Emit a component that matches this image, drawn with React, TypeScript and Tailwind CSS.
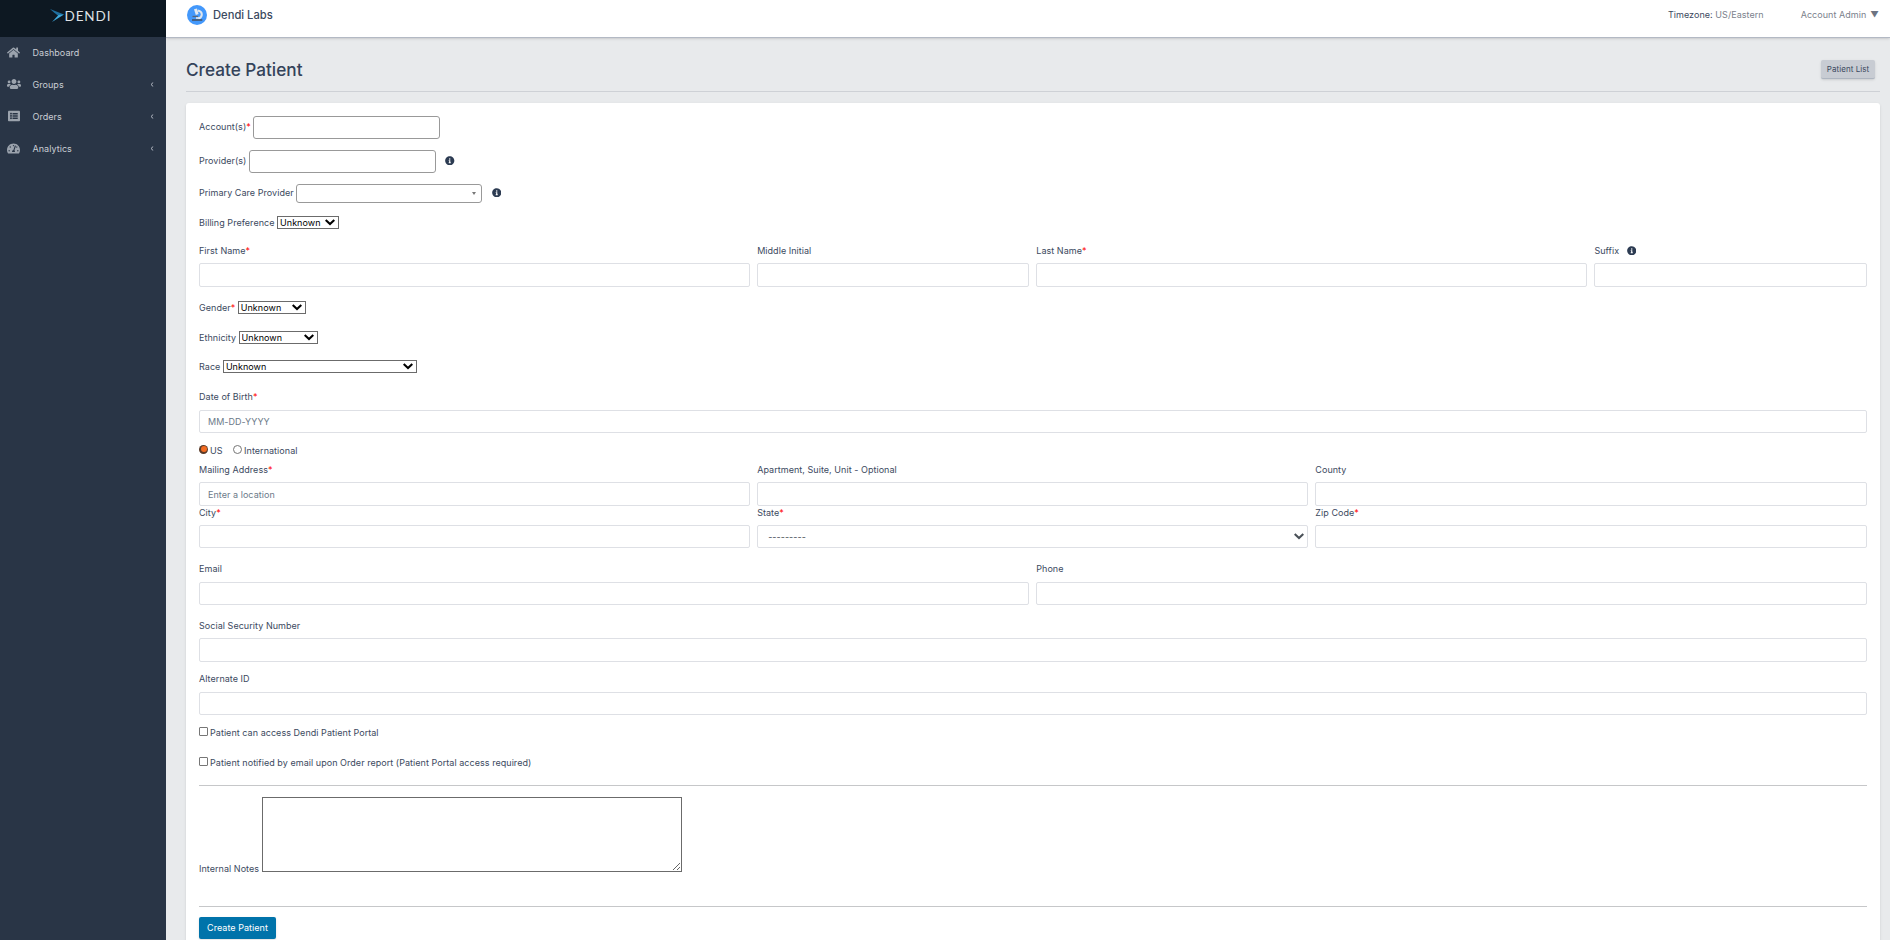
import type { ReactNode } from 'react'
import clsx from 'clsx'
import { FaHome, FaInfoCircle, FaListAlt, FaTachometerAlt, FaUsers } from 'react-icons/fa'

const NAV = [
  { label: 'Dashboard', icon: <FaHome size={13} />, nested: false },
  { label: 'Groups', icon: <FaUsers size={14} />, nested: true },
  { label: 'Orders', icon: <FaListAlt size={12} />, nested: true },
  { label: 'Analytics', icon: <FaTachometerAlt size={13} />, nested: true },
]

function Logo() {
  return (
    <div className="flex items-center h-[37px] pl-[50px] pb-[5px] bg-[#0d1822]">
      <svg width="62" height="14" viewBox="0 0 62 14" fill="none">
        <path d="M0 0 L14 5.5 L8.5 7 L4 3.5 Z" fill="#1f6f9f" />
        <path d="M14 5.5 L2 13 L8.5 6 Z" fill="#3fa9dc" />
        <text x="14.5" y="12" fill="#dfe2e5" fontFamily="Lato" fontSize="13.5" textLength="46">DENDI</text>
      </svg>
    </div>
  )
}

function Sidebar() {
  return (
    <aside className="w-[166px] shrink-0 bg-[#293546]">
      <Logo />
      <nav>
        {NAV.map((item) => (
          <a key={item.label} href="#" className="flex items-center h-8 pr-[12px] text-[#c9ced5]">
            <span className="mb-[2px] flex w-[27px] justify-center text-[#9ba3ad]">{item.icon}</span>
            <span className="ml-[5.5px] flex-1">{item.label}</span>
            {item.nested && (
              <svg width="4" height="5" viewBox="0 0 4 5" fill="none" className="mb-px">
                <path d="M3.2 0.5 L1 2.5 L3.2 4.5" stroke="#b4bac3" />
              </svg>
            )}
          </a>
        ))}
      </nav>
    </aside>
  )
}

function Header() {
  return (
    <header className="flex h-[38px] shrink-0 items-center border-b border-[#b3b9c4] bg-white pl-[21px] pr-[11px] pb-[7px] shadow-sm">
      <svg width="20" height="20" viewBox="0 0 20 20">
        <circle cx="10" cy="10" r="10" fill="#4398fb" />
        <path d="M7 4.2 L10 3.4 L11.6 9 L8.8 10 Z" fill="#e4e9ef" />
        <path d="M11 5.5 C16 6.5 16 12 11.5 13.6" stroke="#dfe6ee" strokeWidth="2" fill="none" />
        <path d="M5.5 11.5 H11" stroke="#56657a" strokeWidth="1.3" />
        <path d="M9 13 H13" stroke="#e4e9ef" strokeWidth="1.6" />
        <path d="M5 15 H15.3" stroke="#465468" strokeWidth="1.6" />
      </svg>
      <span className="ml-[6px] flex-1 text-[11.2px]/3 font-medium tracking-normal">Dendi Labs</span>
      <span className="text-[#7b818c]"><span className="text-[#3b4960]">Timezone:</span> US/Eastern</span>
      <span className="ml-[37px] text-[#7b818c]">Account Admin</span>
      <span className="ml-[4px] text-[8.5px] text-[#6d7482]">▼</span>
    </header>
  )
}

function Label({ children, required, className }: { children: ReactNode; required?: boolean; className?: string }) {
  return (
    <label className={clsx('flex h-3 items-center whitespace-nowrap', className)}>
      {children}
      {required && <span className="text-[#ff0000]">*</span>}
    </label>
  )
}

function Info({ className }: { className?: string }) {
  return <FaInfoCircle size={9.5} className={clsx('text-[#2c3b52]', className)} />
}

function Field({ label, required, info, placeholder, className, box = 'mt-[6px] h-6' }: {
  label: string
  required?: boolean
  info?: boolean
  placeholder?: string
  className?: string
  box?: string
}) {
  return (
    <div className={className}>
      <Label required={required}>{label}{info && <Info className="ml-[7.5px] mb-px" />}</Label>
      <input
        placeholder={placeholder}
        className={clsx('block w-full rounded-[2px] border border-[#dee0e5] bg-white px-2 placeholder:text-[#6c7a89]', box)}
      />
    </div>
  )
}

function Chevron({ className }: { className?: string }) {
  return (
    <svg width="10" height="7" viewBox="0 0 10 7" fill="none" className={clsx('pointer-events-none absolute', className)}>
      <path d="M0.7 1 L5 5 L9.3 1" stroke="currentColor" strokeWidth="2.1" />
    </svg>
  )
}

function NativeSelect({ label, required, width, className }: {
  label: string
  required?: boolean
  width: string
  className: string
}) {
  return (
    <div className={clsx('flex h-[13px] items-center gap-[2.5px]', className)}>
      <Label required={required}>{label}</Label>
      <div className={clsx('relative h-[13px]', width)}>
        <select className="block h-full w-full appearance-none border border-[#6b6b6b] bg-white pl-[2px] leading-[11px] text-black">
          <option>Unknown</option>
        </select>
        <Chevron className="right-1 top-[3px] text-black" />
      </div>
    </div>
  )
}

export default function App() {
  return (
    <div className="flex h-[940px] overflow-hidden bg-[#e8eaec] font-['Inter',sans-serif] text-[9px] leading-3 tracking-[0.045px] text-[#3b4960]">
      <Sidebar />
      <div className="flex min-w-0 flex-1 flex-col">
        <Header />
        <main className="pl-5 pr-[10px]">
          <div className="flex h-[54px] items-center justify-between border-b border-[#ced1d6] pr-[5px] pt-5">
            <h1 className="mb-[9px] text-[17.2px] font-medium leading-6 tracking-normal text-[#34435a]">Create Patient</h1>
            <button className="mb-[10px] h-[19px] w-[54px] rounded-[2px] border-b border-[#aeb5c0] bg-[#c8ccd3] text-[8px] shadow-sm">Patient List</button>
          </div>

          <form className="mt-[11px] h-[880px] rounded-[3px] bg-white pl-[13px] pr-[13.5px] pt-[13px] shadow">
            <div className="flex h-[23px] items-center gap-[2px]">
              <Label required className="mb-[2px]">Account(s)</Label>
              <input className="h-full w-[187px] rounded-[3px] border border-[#999]" />
            </div>
            <div className="mt-[11px] flex h-[23px] items-center gap-[2.5px]">
              <Label className="mb-[2px]">Provider(s)</Label>
              <input className="h-full w-[187px] rounded-[3px] border border-[#999]" />
              <Info className="mb-[2px] ml-[7px]" />
            </div>
            <div className="mt-[11px] flex h-[19px] items-center gap-[2.25px]">
              <Label className="mb-[2px]">Primary Care Provider</Label>
              <div className="flex h-full w-[186px] items-center justify-end rounded-[3px] border border-[#999] pr-[5px]">
                <svg width="4" height="3" viewBox="0 0 4 3"><path d="M0 0 H4 L2 3 Z" fill="#777" /></svg>
              </div>
              <Info className="mb-[2px] ml-[7.5px]" />
            </div>
            <NativeSelect label="Billing Preference" width="w-[62px]" className="mt-[13px]" />

            <div className="mt-4 grid grid-cols-12 gap-x-[7px]">
              <Field label="First Name" required className="col-span-4" />
              <Field label="Middle Initial" className="col-span-2" />
              <Field label="Last Name" required className="col-span-4" />
              <Field label="Suffix" info className="col-span-2" />
            </div>

            <NativeSelect label="Gender" required width="w-[68px]" className="mt-[14px]" />
            <NativeSelect label="Ethnicity" width="w-[79px]" className="mt-[17px]" />
            <NativeSelect label="Race" width="w-[194px]" className="mt-4" />

            <Field label="Date of Birth" required placeholder="MM-DD-YYYY" className="mt-[18px]" box="mt-[7px] h-[23px]" />

            <div className="mt-[10px] flex h-[13px] items-center">
              <span className="mb-px flex h-[9px] w-[9px] items-center justify-center rounded-full bg-[#5a3a28]">
                <span className="h-[6px] w-[6px] rounded-full bg-[#f26b21]" />
              </span>
              <span className="ml-[2px] mt-[2px]">US</span>
              <span className="mb-px ml-[10px] h-[9px] w-[9px] rounded-full border border-[#767676]" />
              <span className="ml-[2.5px] mt-[2px]">International</span>
            </div>

            <div className="mt-2 grid grid-cols-3 gap-x-[7px]">
              <Field label="Mailing Address" required placeholder="Enter a location" />
              <Field label="Apartment, Suite, Unit - Optional" />
              <Field label="County" />
            </div>
            <div className="mt-px grid grid-cols-3 gap-x-[7px]">
              <Field label="City" required box="mt-[6px] h-[23px]" />
              <div>
                <Label required>State</Label>
                <div className="relative mt-[6px] h-[23px]">
                  <select className="block h-full w-full appearance-none rounded-[2px] border border-[#dee0e5] bg-white px-[10px] text-[#495057]">
                    <option>---------</option>
                  </select>
                  <Chevron className="right-1 top-2 text-[#495057]" />
                </div>
              </div>
              <Field label="Zip Code" required box="mt-[6px] h-[23px]" />
            </div>
            <div className="mt-[15px] grid grid-cols-2 gap-x-[7px]">
              <Field label="Email" box="mt-[7px] h-[23px]" />
              <Field label="Phone" box="mt-[7px] h-[23px]" />
            </div>
            <Field label="Social Security Number" className="mt-[15px]" />
            <Field label="Alternate ID" className="mt-[11px]" box="mt-[7px] h-[23px]" />

            <div className="mt-[10px] flex h-[13px] items-center">
              <span className="mb-px h-[9px] w-[9px] rounded-[1px] border border-[#767676]" />
              <span className="ml-[2px] mt-[2px]">Patient can access Dendi Patient Portal</span>
            </div>
            <div className="mt-[17px] flex h-[13px] items-center">
              <span className="mb-px h-[9px] w-[9px] rounded-[1px] border border-[#767676]" />
              <span className="ml-[2px] mt-[2px]">Patient notified by email upon Order report (Patient Portal access required)</span>
            </div>

            <hr className="mt-[17px] border-[#c6c7c9]" />
            <div className="mt-[11px] flex h-[75px] items-end gap-[3px]">
              <Label className="-mb-[3px]">Internal Notes</Label>
              <textarea className="block h-[75px] w-[420px] border border-[#6b6b6b]" />
            </div>
            <hr className="mt-[34px] border-[#c6c7c9]" />
            <button className="mt-[10px] h-[22px] w-[77px] rounded-[2px] bg-[#0073aa] text-white shadow">Create Patient</button>
          </form>
        </main>
      </div>
    </div>
  )
}
